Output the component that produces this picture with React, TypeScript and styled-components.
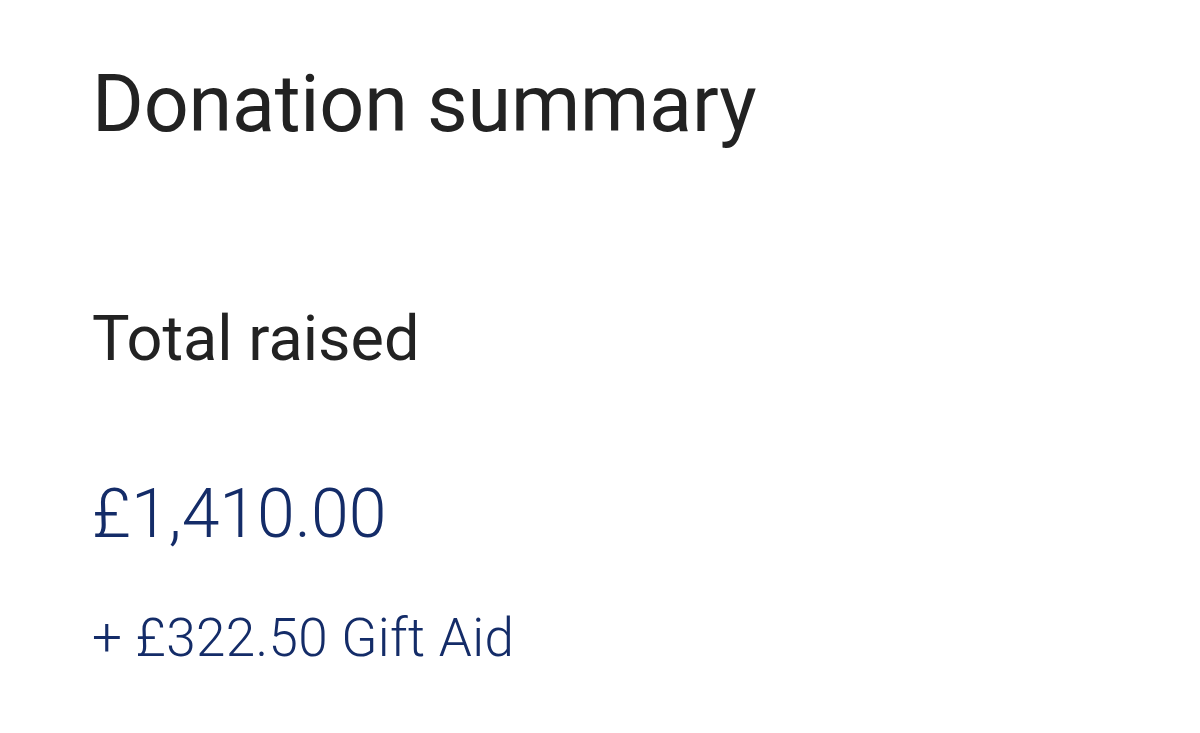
import * as React from "react";
import styled, { createGlobalStyle } from "styled-components";

const GlobalStyle = createGlobalStyle`
  html, body {
    margin: 0;
    padding: 0;
    background: #ffffff;
  }
  body {
    font-family: Roboto, "Noto Sans", sans-serif;
  }
`;

const Page = styled.main`
  display: flex;
  flex-direction: column;
  padding: 57px 92px 0;
  height: 733px;
  box-sizing: border-box;
`;

const Title = styled.h1`
  margin: 0;
  font-size: 79px;
  font-weight: 400;
  line-height: 1.2;
  letter-spacing: -0.2px;
  color: #222222;
`;

const Label = styled.h2`
  margin: 149px 0 0;
  font-size: 63px;
  font-weight: 400;
  line-height: 1.2;
  color: #222222;
`;

const Amount = styled.div<{ $size: number; $gap: number; $spacing?: number }>`
  margin-top: ${(p) => p.$gap}px;
  font-size: ${(p) => p.$size}px;
  font-weight: 300;
  line-height: 1.2;
  letter-spacing: ${(p) => p.$spacing ?? 0}px;
  color: #142c68;
`;

export default function App() {
  return (
    <>
      <GlobalStyle />
      <Page>
        <Title>Donation summary</Title>
        <Label>Total raised</Label>
        <Amount $size={68} $gap={98}>
          £1,410.00
        </Amount>
        <Amount $size={53} $gap={51} $spacing={0.35}>
          + £322.50 Gift Aid
        </Amount>
      </Page>
    </>
  );
}
